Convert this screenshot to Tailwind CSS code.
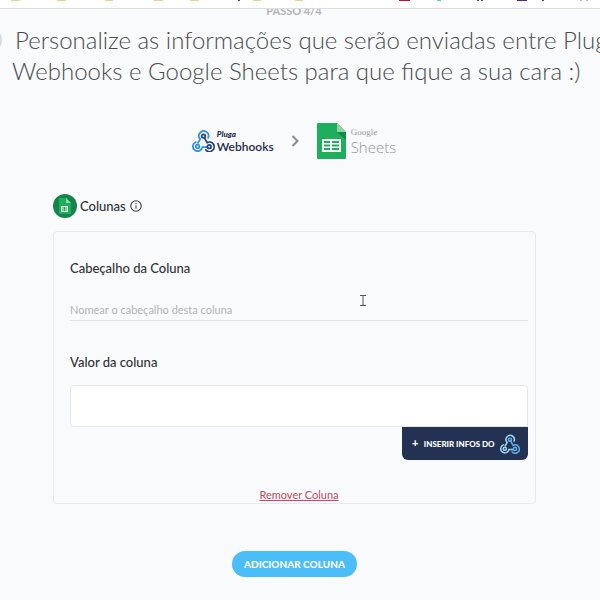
<!DOCTYPE html>
<html lang="pt-BR">

<head>
  <meta charset="UTF-8">
  <meta name="viewport" content="width=device-width, initial-scale=1.0">
  <title>Pluga - Personalizar informações</title>
  <script src="https://cdn.jsdelivr.net/npm/@tailwindcss/browser@4"></script>
</head>

<body class="bg-[#f8fafc] text-[#2f3136] font-['Lato',sans-serif] min-h-screen overflow-hidden">
  <!-- Bookmarks bar -->
  <nav class="relative z-10 h-[9px] bg-white border-b border-[#dcdddf] overflow-hidden">
    <svg class="w-full h-px" viewBox="0 0 600 1" preserveAspectRatio="xMinYMin slice" aria-hidden="true">
      <path fill="#e6d48d" d="M11 0h9v1h-9zM57 0h9v1h-9zM105 0h8v1h-8zM154 0h9v1h-9zM190 0h9v1h-9zM253 0h8v1h-8zM295 0h8v1h-8z"></path>
      <path fill="#c4161c" d="M399 0h11v1h-11z"></path>
      <path fill="#5bc5ea" d="M437 0h4v1h-4z"></path>
      <path fill="#555" d="M477 0h2v1h-2zM481 0h2v1h-2zM238 0h2v1h-2zM542 0h2v1h-2z"></path>
      <path fill="#bbb" d="M580 0h2v1h-2zM586 0h2v1h-2z"></path>
      <path fill="#4b2a9b" d="M517 0h10v1h-10z"></path>
    </svg>
  </nav>

  <main>
    <!-- Step heading -->
    <header class="relative -mt-1">
      <span class="absolute -left-6 top-[22px] size-[26px] rounded-full bg-[#d9dadb]"></span>
      <p class="pr-3 text-center text-[11px] leading-[12px] font-bold text-[#b0b2b5]">PASSO 4/4</p>
      <h1 class="mt-[7px] pl-3 indent-[3px] text-2xl leading-[31px] font-light text-[#4a4c50] whitespace-nowrap">
        Personalize as informações que serão enviadas entre Pluga<br>
        Webhooks e Google Sheets para que fique a sua cara :)
      </h1>
    </header>

    <!-- Connected apps -->
    <div class="mt-[37px] pr-3 flex items-center justify-center text-[#1f2c4d]">
      <svg class="w-[23px] h-[22px]" viewBox="0 0 24 23" fill="none" stroke-width="1.8" stroke-linecap="round" aria-hidden="true">
        <g stroke="#2f8fe0">
          <path d="M16.800 8.200A5 5 0 1 0 8.600 9.600L6.200 13.600"></path>
          <path d="M4 12.500a5 5 0 1 0 6.800 5.500h4.600"></path>
          <circle cx="5.800" cy="17.200" r="1.900"></circle>
        </g>
        <g stroke="#22407c">
          <path d="M13 8.200l2.800 5a5 5 0 1 1-1.400 7.600"></path>
          <circle cx="12" cy="6.400" r="1.900"></circle>
          <circle cx="18" cy="17.400" r="1.900"></circle>
        </g>
      </svg>
      <div class="ml-[2px]">
        <p class="text-[8px] leading-[10px] font-black italic">Pluga</p>
        <p class="text-xs leading-[15px] font-semibold">Webhooks</p>
      </div>
      <svg class="mx-[17px] w-[9px] h-3" viewBox="0 0 9 12" fill="none" stroke="#8a8c90" stroke-width="2" aria-hidden="true">
        <path d="M1.500 1l5 5-5 5"></path>
      </svg>
      <svg class="w-[29px] h-9" viewBox="0 0 29 36" aria-hidden="true">
        <path fill="#1fae5b" d="M1 0h19l9 9v26a1 1 0 0 1-1 1H1a1 1 0 0 1-1-1V1a1 1 0 0 1 1-1z"></path>
        <path fill="#8ed1ab" d="M20 0l9 9h-9z"></path>
        <path fill="#158a47" d="M20 9h9v8z"></path>
        <path fill="#fff" fill-rule="evenodd" d="M5 16h19v13H5zM7 18v2h6v-2zm8 0v2h7v-2zM7 21.500v2h6v-2zm8 0v2h7v-2zM7 25v2h6v-2zm8 0v2h7v-2z"></path>
      </svg>
      <div class="ml-[5px] text-[#96989c]">
        <p class="font-['Liberation_Serif',serif] text-[9px] leading-[11px]">Google</p>
        <p class="font-['Open_Sans',sans-serif] font-light text-[15px] leading-[18px]">Sheets</p>
      </div>
    </div>

    <section class="mt-[35px] ml-[53px] mr-16">
      <h2 class="flex items-center gap-1 text-[13px] leading-[24px] font-medium">
        <svg class="size-6 -mr-px" viewBox="0 0 24 24" aria-hidden="true">
          <circle cx="12" cy="12" r="12" fill="#14854a"></circle>
          <path fill="#1fae5b" d="M6 4h7l5 5v11H6z"></path>
          <path fill="#8ed1ab" d="M13 4l5 5h-5z"></path>
          <path fill="#e4f5ea" d="M8 12h7v6H8z"></path>
          <path stroke="#1fae5b" d="M9 14h5M9 16h5M11.500 13v4"></path>
        </svg>
        Colunas
        <svg class="size-3" viewBox="0 0 11 11" fill="none" stroke="#3d3f44" aria-hidden="true">
          <circle cx="5.500" cy="5.500" r="4.800"></circle>
          <path d="M5.500 5v3M5.500 2.800v1"></path>
        </svg>
      </h2>

      <!-- Column card -->
      <form class="mt-[13px] pt-7 pl-4 pr-[7px] rounded border border-[#e6e8ea]">
        <label for="header" class="block text-[13px] leading-[16px] font-medium">Cabeçalho da Coluna</label>
        <input id="header" type="text" placeholder="Nomear o cabeçalho desta coluna" class="mt-[23px] block w-full h-[22px] border-b border-[#e2e3e4] text-[11px] placeholder:text-[#b2b4b6] outline-none">

        <label for="value" class="mt-[33px] block text-[13px] leading-[16px] font-medium">Valor da coluna</label>
        <input id="value" type="text" class="mt-[15px] block w-full h-[42px] px-3 bg-white border border-[#e4e6e8] rounded-t rounded-bl text-sm outline-none">
        <button type="button" class="ml-auto flex items-center justify-between h-[33px] w-[126px] pl-[10px] pr-2 bg-[#233153] text-white text-[8px] font-black rounded-b-md">
          <span class="text-[11px]">+</span>
          <span class="whitespace-nowrap">INSERIR INFOS DO</span>
          <svg class="size-5" viewBox="0 0 24 23" fill="none" stroke-width="1.800" stroke-linecap="round" aria-hidden="true">
            <g stroke="#9fd4f3">
              <path d="M16.800 8.200A5 5 0 1 0 8.600 9.600L6.200 13.600"></path>
              <path d="M4 12.500a5 5 0 1 0 6.800 5.500h4.600"></path>
              <circle cx="5.800" cy="17.200" r="1.900"></circle>
            </g>
            <g stroke="#5fb2e6">
              <path d="M13 8.200l2.800 5a5 5 0 1 1-1.400 7.600"></path>
              <circle cx="12" cy="6.400" r="1.900"></circle>
              <circle cx="18" cy="17.400" r="1.900"></circle>
            </g>
          </svg>
        </button>

        <div class="mt-7 pb-px text-center">
          <button type="button" class="block mx-auto text-[11px] leading-[14px] text-[#c04b5c] underline">Remover Coluna</button>
        </div>
      </form>

      <button type="button" class="mt-[47px] mx-auto block h-[26px] px-3 rounded-full bg-[#4bbdf8] text-white text-[10px] font-black">ADICIONAR COLUNA</button>
    </section>
  </main>

  <!-- Text cursor -->
  <svg class="absolute left-[360px] top-[295px] w-[6px] h-[11px]" viewBox="0 0 6 11" fill="none" stroke="#555" aria-hidden="true">
    <path d="M0 .5h6M0 10.500h6M3 1v9"></path>
  </svg>
</body>

</html>
